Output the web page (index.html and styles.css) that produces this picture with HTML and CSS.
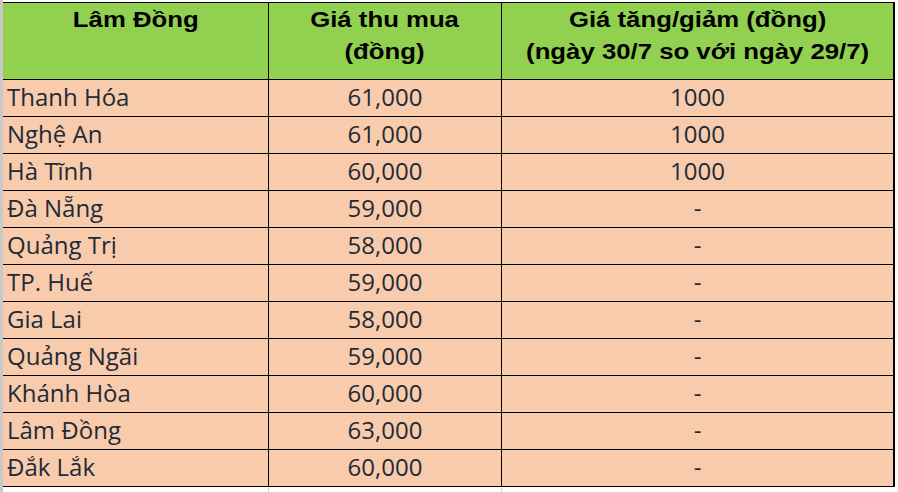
FILE: index.html
```html
<!DOCTYPE html>
<html lang="vi">
<head>
<meta charset="utf-8">
<title>Giá thu mua</title>
<link rel="stylesheet" href="styles.css">
</head>
<body>
<div class="page">
  <div class="sheet">
    <div class="cell head"><span class="stretch">Lâm Đồng</span></div>
    <div class="cell head"><span class="stretch">Giá thu mua<br>(đồng)</span></div>
    <div class="cell head last"><span class="stretch">Giá tăng/giảm (đồng)<br>(ngày 30/7 so với ngày 29/7)</span></div>

    <div class="cell name">Thanh Hóa</div><div class="cell num">61,000</div><div class="cell num last">1000</div>
    <div class="cell name">Nghệ An</div><div class="cell num">61,000</div><div class="cell num last">1000</div>
    <div class="cell name">Hà Tĩnh</div><div class="cell num">60,000</div><div class="cell num last">1000</div>
    <div class="cell name">Đà Nẵng</div><div class="cell num">59,000</div><div class="cell num last">-</div>
    <div class="cell name">Quảng Trị</div><div class="cell num">58,000</div><div class="cell num last">-</div>
    <div class="cell name">TP. Huế</div><div class="cell num">59,000</div><div class="cell num last">-</div>
    <div class="cell name">Gia Lai</div><div class="cell num">58,000</div><div class="cell num last">-</div>
    <div class="cell name">Quảng Ngãi</div><div class="cell num">59,000</div><div class="cell num last">-</div>
    <div class="cell name">Khánh Hòa</div><div class="cell num">60,000</div><div class="cell num last">-</div>
    <div class="cell name">Lâm Đồng</div><div class="cell num">63,000</div><div class="cell num last">-</div>
    <div class="cell name">Đắk Lắk</div><div class="cell num">60,000</div><div class="cell num last">-</div>
  </div>
  <div class="tail">
    <div class="tail-col c1"></div>
    <div class="tail-col c2"></div>
    <div class="tail-col c3"></div>
  </div>
</div>
</body>
</html>
```

FILE: styles.css
```css
html, body {
  margin: 0;
  padding: 0;
  background: #ffffff;
}

.page {
  width: 895px;
  height: 492px;
  padding-top: 2px;
  box-sizing: border-box;
  border-left: 3px solid #c8c8c8;
  overflow: hidden;
}

.sheet {
  display: grid;
  grid-template-columns: 266px 233px 391px;
  grid-template-rows: 77px repeat(11, 37px);
  width: 890px;
  border-top: 1px solid #000;
  border-right: 2px solid #000;
}

.cell {
  box-sizing: border-box;
  border-right: 1px solid #000;
  border-bottom: 1px solid #000;
  background: #f8cbad;
}

.cell.last {
  border-right: none;
}

.head {
  background: #92d050;
  font-family: "Liberation Sans", Arial, sans-serif;
  font-weight: bold;
  font-size: 22px;
  line-height: 32px;
  color: #000;
  text-align: center;
  padding-top: 1px;
  white-space: nowrap;
}

.stretch {
  display: inline-block;
  transform: scaleX(1.17);
  transform-origin: center top;
}

.name,
.num {
  font-family: "Open Sans", "Noto Sans", sans-serif;
  font-size: 24px;
  line-height: 34px;
  padding-bottom: 2px;
  color: #222a35;
}

.name {
  padding-left: 4px;
  white-space: nowrap;
}

.num {
  text-align: center;
}

.tail {
  display: flex;
  height: 6px;
}

.tail-col {
  box-sizing: border-box;
  border-right: 1px solid #d4d4d4;
}

.tail-col.c1 { width: 266px; }
.tail-col.c2 { width: 233px; }
.tail-col.c3 { width: 393px; border-right: none; }
```
